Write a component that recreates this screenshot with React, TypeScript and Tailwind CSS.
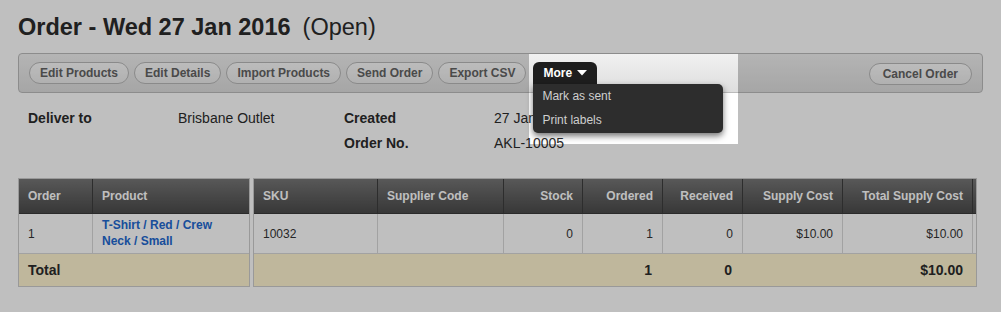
import React from "react";

const buttons = ["Edit Products", "Edit Details", "Import Products", "Send Order", "Export CSV"];

function PillButton({ label, wide }: { label: string; wide?: boolean }) {
  return (
    <button
      className={`h-[22px] rounded-full border border-[#b9b9b9] bg-gradient-to-b from-[#fbfbfb] to-[#ececec] text-[12px] font-bold leading-[20px] text-[#636363] ${
        wide ? "px-[13px]" : "px-[10px]"
      }`}
    >
      {label}
    </button>
  );
}

const headCell = "flex items-center px-[9px] text-[12px] font-bold text-white";
const bodyCell = "flex items-center px-[9px] text-[12px] text-[#333]";

export default function App() {
  return (
    <div className="relative h-[312px] w-[1001px] overflow-hidden bg-white font-['Liberation_Sans',Arial,sans-serif] text-[#2b2b2b]">
      <div className="px-[18px] pt-[13px]">
        {/* Title */}
        <h1 className="text-[23.5px] font-bold leading-[28px]">
          Order - Wed 27 Jan 2016
          <span className="ml-[12px] font-normal">(Open)</span>
        </h1>

        {/* Toolbar */}
        <div className="mt-[12px] flex h-[40px] items-center gap-[5px] rounded-[4px] border border-[#bbbbbb] bg-gradient-to-b from-[#f1f1f1] to-[#dedede] px-[10px]">
          {buttons.map((b) => (
            <PillButton key={b} label={b} />
          ))}
          <div className="relative z-10 ml-[2px] self-start pt-[8px]">
            <button className="flex h-[22px] items-center gap-[5px] rounded-t-[6px] bg-[#1e1e1e] px-[10px] text-[12px] font-bold text-white">
              More
              <svg width="10" height="6" viewBox="0 0 10 6">
                <path d="M0 0 H10 L5 5.5 Z" fill="#ffffff" />
              </svg>
            </button>
            <div className="absolute left-0 top-[30px] w-[190px] rounded-b-[5px] rounded-tr-[5px] bg-[#2d2d2d] shadow-[0_3px_6px_rgba(0,0,0,0.55)]">
              <div className="h-[25px] pl-[9px] text-[12px] leading-[25px] text-[#cfcfcf]">Mark as sent</div>
              <div className="h-[24px] pl-[9px] text-[12px] leading-[23px] text-[#cfcfcf]">Print labels</div>
            </div>
          </div>
          <div className="ml-auto">
            <PillButton label="Cancel Order" wide />
          </div>
        </div>

        {/* Details */}
        <div className="mt-[13px] grid grid-cols-[150px_166px_150px_1fr] pl-[10px] text-[14px] leading-[25px]">
          <div className="font-bold">Deliver to</div>
          <div>Brisbane Outlet</div>
          <div className="font-bold">Created</div>
          <div>27 Jan 2016</div>
          <div />
          <div />
          <div className="font-bold">Order No.</div>
          <div>AKL-10005</div>
        </div>

        {/* Table */}
        <div className="mt-[22px] flex gap-[3px]">
          <div className="w-[232px] border border-[#cccccc]">
            <div className="grid h-[35px] grid-cols-[73px_1fr] border-b border-[#3a3a3a] bg-gradient-to-b from-[#767676] to-[#4b4b4b]">
              <div className={headCell}>Order</div>
              <div className={`${headCell} border-l border-[#3d3d3d]`}>Product</div>
            </div>
            <div className="grid h-[40px] grid-cols-[73px_1fr] border-b border-[#d9d9d9]">
              <div className={bodyCell}>1</div>
              <div className={`${bodyCell} border-l border-[#d9d9d9]`}>
                <span className="-mt-[2px] font-bold leading-[16px] text-[#2268cf]">
                  T-Shirt / Red / Crew
                  <br />
                  Neck / Small
                </span>
              </div>
            </div>
            <div className="flex h-[32px] items-center bg-[#fff5d1] px-[9px] text-[14px] font-bold">Total</div>
          </div>

          <div className="w-[724px] border border-[#cccccc]">
            <div className="grid h-[35px] grid-cols-[123px_126px_79px_80px_80px_100px_130px_1fr] border-b border-[#3a3a3a] bg-gradient-to-b from-[#767676] to-[#4b4b4b]">
              <div className={headCell}>SKU</div>
              <div className={`${headCell} border-l border-[#3d3d3d]`}>Supplier Code</div>
              <div className={`${headCell} justify-end border-l border-[#3d3d3d]`}>Stock</div>
              <div className={`${headCell} justify-end border-l border-[#3d3d3d]`}>Ordered</div>
              <div className={`${headCell} justify-end border-l border-[#3d3d3d]`}>Received</div>
              <div className={`${headCell} justify-end border-l border-[#3d3d3d]`}>Supply Cost</div>
              <div className={`${headCell} justify-end border-l border-[#3d3d3d]`}>Total Supply Cost</div>
              <div className="border-l border-[#3d3d3d]" />
            </div>
            <div className="grid h-[40px] grid-cols-[123px_126px_79px_80px_80px_100px_130px_1fr] border-b border-[#d9d9d9]">
              <div className={bodyCell}>10032</div>
              <div className={`${bodyCell} border-l border-[#d9d9d9]`} />
              <div className={`${bodyCell} justify-end border-l border-[#d9d9d9]`}>0</div>
              <div className={`${bodyCell} justify-end border-l border-[#d9d9d9]`}>1</div>
              <div className={`${bodyCell} justify-end border-l border-[#d9d9d9]`}>0</div>
              <div className={`${bodyCell} justify-end border-l border-[#d9d9d9]`}>$10.00</div>
              <div className={`${bodyCell} justify-end border-l border-[#d9d9d9]`}>$10.00</div>
              <div className="border-l border-[#d9d9d9]" />
            </div>
            <div className="grid h-[32px] grid-cols-[123px_126px_79px_80px_80px_100px_130px_1fr] bg-[#fff5d1] text-[14px] font-bold">
              <div />
              <div />
              <div />
              <div className="flex items-center justify-end px-[10px]">1</div>
              <div className="flex items-center justify-end px-[10px]">0</div>
              <div />
              <div className="flex items-center justify-end px-[9px]">$10.00</div>
              <div />
            </div>
          </div>
        </div>
      </div>

      {/* Spotlight overlay */}
      <div className="pointer-events-none absolute left-[529px] top-[54px] z-20 h-[90px] w-[209px] shadow-[0_0_0_2000px_rgba(0,0,0,0.25)]" />
    </div>
  );
}
